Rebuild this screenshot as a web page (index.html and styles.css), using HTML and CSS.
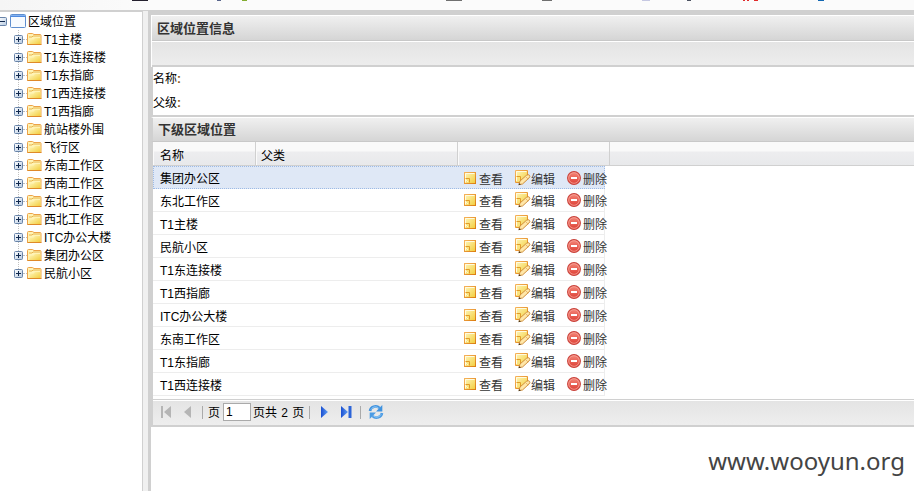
FILE: index.html
```html
<!DOCTYPE html>
<html lang="zh-CN">
<head>
<meta charset="utf-8">
<title>区域位置</title>
<link rel="stylesheet" href="styles.css">
</head>
<body>
<svg class="defs" width="0" height="0" aria-hidden="true">
  <defs>
    <linearGradient id="gold" x1="0" y1="0" x2="1" y2="1"><stop offset="0" stop-color="#fff7bd"/><stop offset="1" stop-color="#f2cc3a"/></linearGradient>
    <linearGradient id="amber" x1="0" y1="0" x2="1" y2="1"><stop offset="0" stop-color="#f6b45c"/><stop offset="1" stop-color="#dc7d10"/></linearGradient>
    <linearGradient id="box" x1="0" y1="0" x2="1" y2="1"><stop offset="0" stop-color="#fff"/><stop offset="1" stop-color="#b4c8e0"/></linearGradient>
    <linearGradient id="red" x1="0" y1="0" x2="0" y2="1"><stop offset="0" stop-color="#f58a7c"/><stop offset="1" stop-color="#dc3c32"/></linearGradient>
    <linearGradient id="blue" x1="0" y1="0" x2="1" y2="0"><stop offset="0" stop-color="#1b4fd0"/><stop offset="1" stop-color="#5f9ff5"/></linearGradient>
  </defs>
  <symbol id="plus" viewBox="0 0 9 9"><rect x=".5" y=".5" width="8" height="8" rx="1" fill="url(#box)" stroke="#6883a8"/><path d="M2 4.500h5M4.500 2v5" stroke="#10284e"/></symbol>
  <symbol id="minus" viewBox="0 0 9 9"><rect x=".5" y=".5" width="8" height="8" rx="1" fill="url(#box)" stroke="#6883a8"/><path d="M2 4.500h5" stroke="#10284e"/></symbol>
  <symbol id="folder" viewBox="0 0 15 12"><path d="M.5 11.500V1.500q0-1 1-1h4l1.500 1h6q1 0 1 1v9z" fill="#fff3b5" stroke="#eda348"/><path d="M2 4h3l1-1h7" fill="none" stroke="#e7b54c"/><path d="M2.500 11.500v-5h4l1.500-1.500h5.500v6.500z" fill="url(#gold)"/><path d="M.5 11.500h14" stroke="#df8928"/></symbol>
  <symbol id="note" viewBox="0 0 12 12"><rect x=".5" y=".5" width="11" height="11" fill="url(#gold)" stroke="url(#amber)"/><path d="M1.500 10.500v-9h9" fill="none" stroke="#fffbe0"/><path d="M1.500 6.500h4v4" fill="#fbe27a" stroke="#e29c28"/><path d="M2 8l2 2" stroke="#fff6c0"/></symbol>
  <symbol id="edit" viewBox="0 0 16 16"><path d="M.5 .5h12v6l-4.500 6H.5z" fill="url(#gold)" stroke="url(#amber)"/><path d="M1.500 11V1.500h10" fill="none" stroke="#fffbe0"/><path d="M1.500 6.500h4v4" fill="#fbe27a" stroke="#e29c28"/><path d="M4 14.500l1-3.500 6.500-5.700q1.800-1.300 3 0 1 1.300-.6 2.800L7.500 14z" fill="#ffe7a8" stroke="#d08f3c"/><path d="M10.500 6.500l2.700 2.700" stroke="#e9b767"/><path d="M3.500 15.200l.5-2 2 1.400z" fill="#493619"/></symbol>
  <symbol id="delete" viewBox="0 0 14 14"><circle cx="7" cy="7" r="6.400" fill="url(#red)" stroke="#c9443d" stroke-width="1.100"/><circle cx="7" cy="7" r="5.300" fill="none" stroke="#f9a69b" stroke-width=".8"/><rect x="4" y="6" width="6" height="2" fill="#fff"/></symbol>
</svg>

<div class="topbar">
  <svg width="914" height="1" viewBox="0 0 914 1" shape-rendering="crispEdges"><path d="M132 .5h16" stroke="#24202e"/><path d="M217 .5h4" stroke="#59668c"/><path d="M242 .5h5" stroke="#83ad32"/><path d="M446 .5h16M542 .5h10" stroke="#707070"/><path d="M642 .5h8" stroke="#c6c8e2"/><path d="M687 .5h4" stroke="#4c5261"/><path d="M743 .5h2M747 .5h2M754 .5h4" stroke="#e02b2b"/><path d="M818 .5h6" stroke="#1267b2"/></svg>
</div>
<div class="layout">
  <nav class="tree">
    <div class="root"><svg class="toggle" width="9" height="9"><use href="#minus"/></svg><svg class="window" width="16" height="14" viewBox="0 0 16 14"><rect x=".5" y=".5" width="15" height="13" rx="1" fill="#f7fbff" stroke="#5f8fcf"/><path d="M1 1h14v2H1z" fill="#4f8be0"/><path d="M1 1.500h14" stroke="#83b2f2"/></svg><span>区域位置</span></div>
    <div class="children" id="nodes"></div>
  </nav>
  <div class="splitter"></div>
  <main class="main">
    <h2 class="title">区域位置信息</h2>
    <div class="toolbar"></div>
    <div class="form"><div>名称<b>:</b></div><div>父级<b>:</b></div></div>
    <h2 class="title second">下级区域位置</h2>
    <div class="grid">
      <div class="head"><span class="c1">名称</span><span class="c2">父类</span><span class="c3"></span></div>
      <div class="rows" id="rows"></div>
    </div>
    <div class="pager">
      <svg class="first" width="12" height="12" viewBox="0 0 12 12"><path d="M1 0h2v12H1zM11 0v12L4 6z" fill="#b5b5b5"/></svg>
      <svg class="prev" width="7" height="12" viewBox="0 0 7 12"><path d="M7 0v12L0 6z" fill="#b5b5b5"/></svg>
      <i class="sep s1"></i>
      <span class="page">页</span><input class="num" value="1" aria-label="页"><span class="total">页共 2 页</span>
      <i class="sep s2"></i>
      <svg class="next" width="7" height="12" viewBox="0 0 7 12"><path d="M0 0v12l7-6z" fill="url(#blue)"/></svg>
      <svg class="last" width="11" height="12" viewBox="0 0 11 12"><path d="M0 0v12l7-6z" fill="url(#blue)"/><path d="M7.500 0h3v12h-3z" fill="#2d65d8"/></svg>
      <i class="sep s3"></i>
      <svg class="refresh" width="16" height="16" viewBox="0 0 16 16"><path d="M2 7C2.500 3 8 .8 11.500 4" fill="none" stroke="#3f92df" stroke-width="2.600"/><path d="M14.300 1v6.500H8z" fill="#3f92df"/><path d="M14 9c-.5 4-6 6.200-9.500 3" fill="none" stroke="#4b9be4" stroke-width="2.600"/><path d="M1.700 15V8.500H8z" fill="#4b9be4"/><path d="M3 5.500C5 2.500 8 2.200 10.500 4M13 10.500c-2 3-5 3.300-7.500 1.500" fill="none" stroke="#a5d5fa"/></svg>
    </div>
    <div class="rest"><div class="watermark">www.wooyun.org</div></div>
  </main>
</div>
<script src="app.js"></script>
</body>
</html>
```
FILE: app.js
```js
const nodes = ['T1主楼', 'T1东连接楼', 'T1东指廊', 'T1西连接楼', 'T1西指廊', '航站楼外围', '飞行区', '东南工作区', '西南工作区', '东北工作区', '西北工作区', 'ITC办公大楼', '集团办公区', '民航小区'];
const rows = ['集团办公区', '东北工作区', 'T1主楼', '民航小区', 'T1东连接楼', 'T1西指廊', 'ITC办公大楼', '东南工作区', 'T1东指廊', 'T1西连接楼'];

document.getElementById('nodes').innerHTML = nodes.map(name =>
  `<div class="node"><svg class="toggle" width="9" height="9"><use href="#plus"/></svg><i class="stub"></i><svg class="folder" width="15" height="12"><use href="#folder"/></svg><span>${name}</span></div>`).join('');

document.getElementById('rows').innerHTML = rows.map(name =>
  `<div class="row"><span class="name">${name}</span><span class="act view"><svg width="12" height="12"><use href="#note"/></svg><span>查看</span></span><span class="act modify"><svg width="16" height="16"><use href="#edit"/></svg><span>编辑</span></span><span class="act remove"><svg width="14" height="14"><use href="#delete"/></svg><span>删除</span></span></div>`).join('');
```
FILE: styles.css
```css
* { box-sizing: border-box; }
body {
  margin: 0;
  height: 491px;
  overflow: hidden;
  display: flex;
  flex-direction: column;
  background: #fff;
  color: #000;
  font: 12px/18px "Liberation Sans", "Noto Sans CJK SC", sans-serif;
  white-space: nowrap;
}
svg { display: block; flex: none; }
.defs { position: absolute; }
.topbar { height: 10px; flex: none; background: linear-gradient(90deg, #f5f5f5, #fbfbfb 150px); }
.layout { flex: 1; display: flex; min-height: 0; }

.tree { width: 143px; border-top: 2px solid #d0d0d0; border-right: 1px solid #d0d0d0; overflow: hidden; }
.root { height: 18px; display: flex; align-items: center; }
.root .toggle { margin-left: -2px; }
.root .window { margin: 0 2px 0 3px; }
.children { padding-left: 14px; background: repeating-linear-gradient(#c0c0c0 0 1px, transparent 1px 2px) 18px 0 / 1px 248px no-repeat; }
.node { height: 18px; display: flex; align-items: center; }
.stub { width: 4px; border-top: 1px dotted #c0c0c0; }
.node .folder { margin-right: 2px; }
.root span, .node span { line-height: 18px; padding-top: 2px; }

.splitter { width: 5px; background: #f0f0f0; border-top: 1px solid #d0d0d0; }
.main { flex: 1; min-width: 0; display: flex; flex-direction: column; border-left: 3px solid #d0d0d0; border-top: 5px solid #d0d0d0; }
.title {
  margin: 0 0 0 1px;
  height: 26px;
  flex: none;
  padding-left: 5px;
  font-size: 13px;
  line-height: 25px;
  color: #333;
  border-top: 1px solid #fff;
  border-bottom: 1px solid #c8c8c8;
  background: linear-gradient(#f0f0f0, #d5d5d5);
}
.toolbar { height: 26px; flex: none; margin-left: 1px; border-top: 1px solid #fff; border-bottom: 2px solid #d0d0d0; background: linear-gradient(#e4e4e4, #ededed); }
.form { height: 50px; flex: none; border-left: 2px solid #d0d0d0; border-bottom: 2px solid #d0d0d0; }
.form div { height: 24px; line-height: 25px; }
.form b { color: #8a5a18; }
.title.second { margin-left: 0; height: 25px; line-height: 24px; border-left: 2px solid #d0d0d0; }

.grid { height: 257px; flex: none; border-left: 2px solid #d0d0d0; }
.head { height: 24px; display: flex; border-bottom: 1px solid #d0d0d0; background: linear-gradient(#f9f9f9 0 9px, #ededef 10px, #e8e9eb); line-height: 28px; }
.head span { border-right: 1px solid #d0d0d0; box-shadow: inset 1px 0 #fafafa; padding-left: 5px; }
.head .c1 { width: 103px; padding-left: 7px; }
.head .c2 { width: 202px; }
.head .c3 { width: 152px; }
.row { width: 452px; height: 23px; display: flex; align-items: center; border-bottom: 1px solid #ededed; border-right: 1px solid #ededed; }
.row:first-child { background: #dfe8f6; border: 1px dotted #9dbbe6; }
.row:first-child .name { padding-left: 6px; width: 310px; }
.name { width: 311px; height: 22px; flex: none; padding: 2px 0 0 7px; line-height: 22px; }
.row:first-child .name { height: 21px; padding-top: 1px; }
.act { display: flex; flex: none; align-items: center; height: 20px; width: 52px; color: #333; }
.act span { height: 20px; line-height: 24px; }
.view { width: 51px; gap: 3px; }
.remove { gap: 2px; }

.pager { height: 28px; flex: none; display: flex; align-items: center; padding-bottom: 1px; border-top: 1px solid #d0d0d0; border-bottom: 2px solid #d0d0d0; border-left: 2px solid #d0d0d0; background: linear-gradient(#fff 0 1px, #e4e4e4 1px, #eee); }
.first { margin-left: 7px; }
.prev { margin-left: 12px; }
.sep { width: 1px; height: 13px; background: #aaa; flex: none; }
.s1 { margin: 0 5px 0 11px; }
.page, .total { padding-top: 2px; }
.total { word-spacing: 1px; }
.num { width: 28px; height: 18px; margin: 0 2px 0 3px; padding: 0 2px; border: 1px solid #aaa; border-radius: 0; background: #fff; color: #000; font: inherit; }
.s2 { margin: 0 11px 0 5px; }
.last { margin-left: 13px; }
.s3 { margin: 0 7px 0 8px; }
.rest { flex: 1; display: flex; justify-content: flex-end; }
.watermark { padding: 17px 9px 0 0; color: #444; font: 24px/34px "Noto Sans", "Open Sans", sans-serif; }
```
